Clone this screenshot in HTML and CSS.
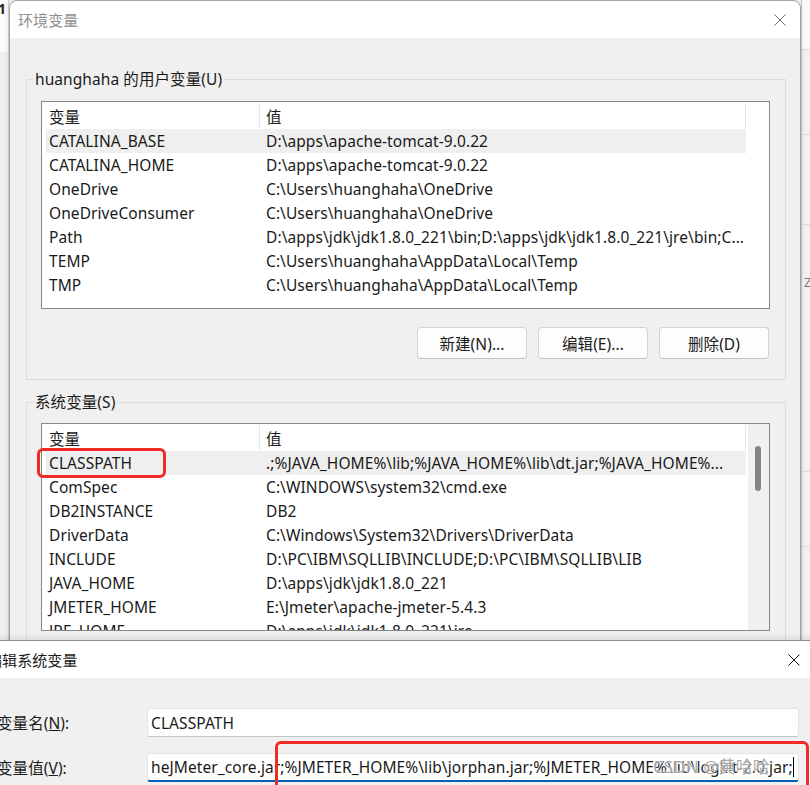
FILE: index.html
```html
<!DOCTYPE html>
<html lang="zh-CN">
<head>
    <meta charset="UTF-8">
    <meta name="viewport" content="width=device-width, initial-scale=1.0">
    <title>环境变量</title>
    <link rel="stylesheet" href="styles.css">
</head>
<body>
<div class="desktop">
    <!-- window behind the dialogs -->
    <div class="back-left">
        <div class="back-left-top"><span class="back-digit">1</span></div>
    </div>
    <div class="back-right">
        <div class="back-right-top"></div>
        <div class="back-right-line line-a"></div>
        <div class="back-right-line line-b"><span class="back-z">Z</span></div>
        <div class="back-right-line line-c"></div>
        <div class="back-right-line line-d"></div>
    </div>

    <!-- 环境变量 -->
    <div class="window env-window">
        <div class="titlebar">
            <span class="title inactive">环境变量</span>
            <svg class="close-icon inactive-icon" width="12" height="12" viewBox="0 0 12 12">
                <path d="M0.5 0.5 L11.5 11.5 M11.5 0.5 L0.5 11.5" stroke="currentColor" stroke-width="1" fill="none"/>
            </svg>
        </div>

        <div class="window-body">
            <fieldset class="group">
                <legend>huanghaha 的用户变量(U)</legend>
                <div class="listbox">
                    <div class="list-body">
                        <div class="list-head">
                            <div class="cell">变量</div>
                            <div class="cell">值</div>
                        </div>
                        <div class="list-row selected"><div class="cell">CATALINA_BASE</div><div class="cell">D:\apps\apache-tomcat-9.0.22</div></div>
                        <div class="list-row"><div class="cell">CATALINA_HOME</div><div class="cell">D:\apps\apache-tomcat-9.0.22</div></div>
                        <div class="list-row"><div class="cell">OneDrive</div><div class="cell">C:\Users\huanghaha\OneDrive</div></div>
                        <div class="list-row"><div class="cell">OneDriveConsumer</div><div class="cell">C:\Users\huanghaha\OneDrive</div></div>
                        <div class="list-row"><div class="cell">Path</div><div class="cell">D:\apps\jdk\jdk1.8.0_221\bin;D:\apps\jdk\jdk1.8.0_221\jre\bin;C...</div></div>
                        <div class="list-row"><div class="cell">TEMP</div><div class="cell">C:\Users\huanghaha\AppData\Local\Temp</div></div>
                        <div class="list-row"><div class="cell">TMP</div><div class="cell">C:\Users\huanghaha\AppData\Local\Temp</div></div>
                    </div>
                </div>
                <div class="button-row">
                    <button class="win-button">新建(N)...</button>
                    <button class="win-button">编辑(E)...</button>
                    <button class="win-button">删除(D)</button>
                </div>
            </fieldset>

            <fieldset class="group sys-group">
                <legend>系统变量(S)</legend>
                <div class="listbox">
                    <div class="list-body">
                        <div class="list-head">
                            <div class="cell">变量</div>
                            <div class="cell">值</div>
                        </div>
                        <div class="list-row selected"><div class="cell">CLASSPATH</div><div class="cell">.;%JAVA_HOME%\lib;%JAVA_HOME%\lib\dt.jar;%JAVA_HOME%...</div></div>
                        <div class="list-row"><div class="cell">ComSpec</div><div class="cell">C:\WINDOWS\system32\cmd.exe</div></div>
                        <div class="list-row"><div class="cell">DB2INSTANCE</div><div class="cell">DB2</div></div>
                        <div class="list-row"><div class="cell">DriverData</div><div class="cell">C:\Windows\System32\Drivers\DriverData</div></div>
                        <div class="list-row"><div class="cell">INCLUDE</div><div class="cell">D:\PC\IBM\SQLLIB\INCLUDE;D:\PC\IBM\SQLLIB\LIB</div></div>
                        <div class="list-row"><div class="cell">JAVA_HOME</div><div class="cell">D:\apps\jdk\jdk1.8.0_221</div></div>
                        <div class="list-row"><div class="cell">JMETER_HOME</div><div class="cell">E:\Jmeter\apache-jmeter-5.4.3</div></div>
                        <div class="list-row"><div class="cell">JRE_HOME</div><div class="cell">D:\apps\jdk\jdk1.8.0_221\jre</div></div>
                    </div>
                    <div class="scrollbar"><div class="thumb"></div></div>
                </div>
            </fieldset>
        </div>
    </div>

    <!-- 编辑系统变量 -->
    <div class="window edit-window">
        <div class="titlebar edit-titlebar">
            <span class="title">编辑系统变量</span>
            <svg class="close-icon" width="12" height="12" viewBox="0 0 12 12">
                <path d="M0.5 0.5 L11.5 11.5 M11.5 0.5 L0.5 11.5" stroke="currentColor" stroke-width="1" fill="none"/>
            </svg>
        </div>
        <div class="edit-body">
            <label class="edit-label">变量名(<u>N</u>):</label>
            <div class="field"><span>CLASSPATH</span></div>
            <label class="edit-label">变量值(<u>V</u>):</label>
            <div class="field focused"><span>heJMeter_core.jar;%JMETER_HOME%\lib\jorphan.jar;%JMETER_HOME%\lib\logkit-2.0.jar;</span><span class="caret"></span></div>
        </div>
    </div>

    <!-- annotations over the screenshot -->
    <div class="mark mark-classpath"></div>
    <div class="mark mark-value"></div>
    <div class="watermark">CSDN @黄哈哈</div>
</div>
</body>
</html>
```

FILE: styles.css
```css
/* Global */
* {
    box-sizing: border-box;
}

body {
    margin: 0;
    width: 810px;
    height: 785px;
    overflow: hidden;
    font-family: "Noto Sans", "Noto Sans CJK SC", sans-serif;
    font-size: 15.5px;
    letter-spacing: 0.08px;
    color: #1a1a1a;
    background-color: #f3f3f3;
}

.desktop {
    position: relative;
    width: 810px;
    height: 785px;
    overflow: hidden;
}

/* Window in the background */
.back-left {
    position: absolute;
    left: 0;
    top: 0;
    width: 9px;
    height: 640px;
    background-color: #f0f0f0;
    border-right: 1px solid #d2d2d2;
}

.back-left-top {
    height: 52px;
    background-color: #fbfbfb;
    overflow: hidden;
}

.back-digit {
    display: block;
    margin: 0 0 0 -2px;
    font-weight: bold;
    font-size: 14px;
    line-height: 18px;
    color: #222;
}

.back-right {
    position: absolute;
    left: 801px;
    top: 0;
    width: 9px;
    height: 640px;
    background-color: #f2f2f2;
    border-left: 1px solid #c8c8c8;
}

.back-right-top {
    height: 50px;
    background-color: #fbfbfb;
    border-bottom: 1px solid #dedede;
}

.back-right-line {
    border-top: 1px solid #dcdcdc;
}

.line-a { margin-top: 84px; }
.line-b { margin-top: 89px; height: 60px; }
.line-c { margin-top: 187px; }
.line-d { margin-top: 74px; }

.back-z {
    display: block;
    margin: 50px 0 0 2px;
    font-size: 13px;
    line-height: 14px;
    color: #777;
}

/* Windows */
.window {
    position: absolute;
    background-color: #f0f0f0;
}

.env-window {
    left: 9px;
    top: 0;
    width: 792px;
    height: 700px;
    border: 1px solid #a3a3a3;
    border-radius: 8px 8px 0 0;
    box-shadow: 0 0 6px rgba(0, 0, 0, 0.12);
}

.titlebar {
    height: 37px;
    display: flex;
    justify-content: space-between;
    align-items: center;
    padding: 0 14px 0 8px;
    background-color: #fff;
    border-radius: 8px 8px 0 0;
}

.title {
    font-size: 15px;
    line-height: 20px;
}

.title.inactive {
    color: #8f8f8f;
}

.close-icon {
    display: block;
    color: #1a1a1a;
}

.close-icon.inactive-icon {
    color: #6e6e6e;
}

.window-body {
    padding: 31px 14px 0 16px;
}

/* Group boxes */
.group {
    margin: 0;
    padding: 12px 15px 20px 14px;
    border: 1px solid #dcdcdc;
    min-width: 0;
}

.group legend {
    margin-left: -8px;
    padding: 0 2px;
    line-height: 20px;
}

.sys-group {
    margin-top: 12px;
    padding-top: 11px;
    padding-bottom: 40px;
}

/* List views */
.listbox {
    display: flex;
    height: 208px;
    background-color: #fff;
    border: 1px solid #878787;
    overflow: hidden;
}

.list-body {
    flex: 1;
    padding-left: 4px;
}

.list-head,
.list-row {
    display: grid;
    grid-template-columns: 214px 486px;
    width: 700px;
}

.list-head {
    height: 27px;
}

.list-head .cell {
    margin-top: 1px;
    height: 25px;
    padding: 2px 0 0 3px;
    line-height: 24px;
    border-right: 1px solid #e5e5e5;
}

.list-head .cell + .cell {
    padding-left: 6px;
}

.list-row {
    height: 24px;
    line-height: 24px;
}

.list-row .cell {
    padding-left: 3px;
    white-space: nowrap;
    overflow: hidden;
}

.list-row .cell + .cell {
    padding-left: 6px;
}

.list-row.selected {
    background-color: #efefef;
}

.scrollbar {
    width: 21px;
    background-color: #f0f0f0;
}

.thumb {
    width: 6px;
    height: 45px;
    margin: 22px 0 0 7px;
    background-color: #858585;
    border-radius: 3px;
}

/* Buttons */
.button-row {
    display: flex;
    justify-content: flex-end;
    gap: 11px;
    margin-top: 18px;
    padding-right: 1px;
}

.win-button {
    width: 110px;
    height: 32px;
    padding: 0;
    font: inherit;
    letter-spacing: inherit;
    color: #1a1a1a;
    background-color: #fdfdfd;
    border: 1px solid #d3d3d3;
    border-bottom-color: #c2c2c2;
    border-radius: 4px;
}

/* Edit dialog */
.edit-window {
    left: -16px;
    top: 640px;
    width: 840px;
    height: 200px;
    border-top: 1px solid #8c8c8c;
    box-shadow: 0 -2px 6px rgba(0, 0, 0, 0.1);
}

.edit-titlebar {
    padding: 0 24px 0 3px;
    border-radius: 0;
}

.edit-body {
    display: grid;
    grid-template-columns: 150px 652px;
    align-items: center;
    row-gap: 16px;
    padding: 30px 0 0 13px;
}

.edit-label {
    line-height: 20px;
}

.field {
    display: flex;
    align-items: center;
    height: 29px;
    padding: 0 4px 0 3px;
    background-color: #fff;
    border: 1px solid #e3e3e3;
    border-bottom-color: #c4c4c4;
    border-radius: 3px;
    white-space: nowrap;
    overflow: hidden;
}

.field.focused {
    border-bottom: 2px solid #005fb8;
}

.caret {
    flex: none;
    width: 1px;
    height: 20px;
    background-color: #000;
}

/* Annotations */
.mark {
    position: absolute;
    border: 3px solid #ee2b25;
    border-radius: 6px;
}

.mark-classpath {
    left: 37px;
    top: 448px;
    width: 129px;
    height: 30px;
}

.mark-value {
    left: 275px;
    top: 741px;
    width: 534px;
    height: 60px;
}

.watermark {
    position: absolute;
    left: 653px;
    top: 755px;
    font-size: 17px;
    line-height: 24px;
    color: rgba(95, 95, 95, 0.55);
    text-shadow: 0 0 2px #fff, 0 0 1px #fff;
    white-space: nowrap;
}
```
